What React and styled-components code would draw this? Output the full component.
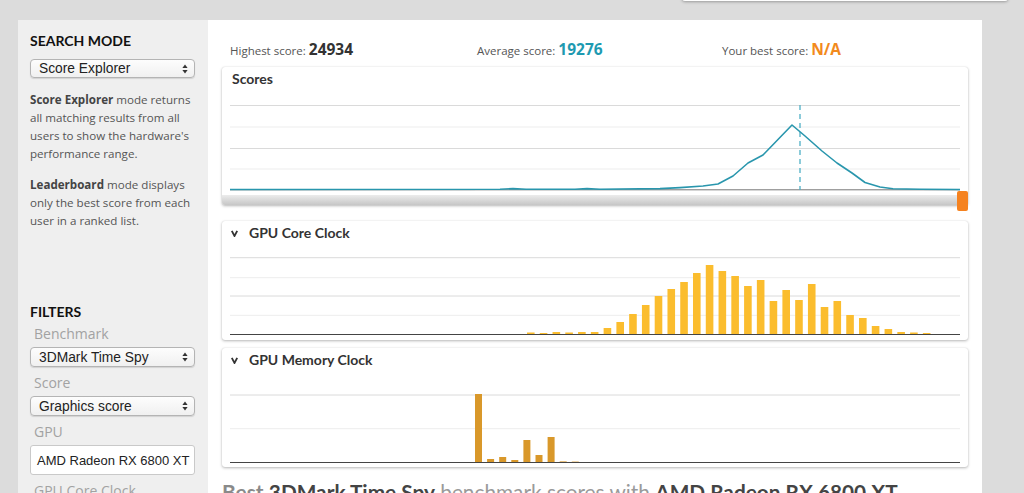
import React from 'react';
import styled, { createGlobalStyle } from 'styled-components';

const GlobalStyle = createGlobalStyle`
	html, body {
		margin: 0;
		background: #dcdcdc;
	}
	body {
		font-family: "Open Sans", "Liberation Sans", sans-serif;
		overflow: hidden;
	}
`;

const Page = styled.div`
	position: relative;
	padding: 20px 0 0 18px;
	height: 473px;
`;

const TopBox = styled.div`
	position: absolute;
	left: 682px;
	top: -40px;
	width: 326px;
	height: 41px;
	background: #fff;
	border-radius: 3px;
	box-shadow: 0 1px 3px rgba(0, 0, 0, 0.3);
`;

const Shell = styled.div`
	display: flex;
	width: 964px;
	height: 100%;
`;

const Sidebar = styled.aside`
	width: 190px;
	flex-shrink: 0;
	background: #efefef;
	padding: 12px 10px 0 12px;
	box-sizing: border-box;
`;

const SideHeading = styled.h3`
	margin: ${(p) => p.$top || 0}px 0 0;
	font-family: Lato, "Open Sans", sans-serif;
	font-weight: 700;
	font-size: 14px;
	line-height: 18px;
	color: #111;
	text-transform: uppercase;
`;

const SelectBox = styled.div`
	display: flex;
	align-items: center;
	justify-content: space-between;
	height: ${(p) => p.$h || 20}px;
	width: 165px;
	box-sizing: border-box;
	margin-top: ${(p) => p.$top || 0}px;
	padding: 0 6px 0 8px;
	border: 1px solid #b4b4b4;
	border-radius: 4px;
	background: linear-gradient(#fdfdfd, #f0f0f0);
	box-shadow: 0 1px 1px rgba(0, 0, 0, 0.12);
	font-family: "Liberation Sans", Arial, sans-serif;
	font-size: 13.8px;
	color: #222;
`;

const Arrows = () => (
	<svg width="6" height="10" viewBox="0 0 6 10">
		<polygon points="3,0.5 5.6,4 0.4,4" fill="#333" />
		<polygon points="0.4,6 5.6,6 3,9.5" fill="#333" />
	</svg>
);

const Desc = styled.p`
	margin: 13px 0 0;
	font-size: 11.6px;
	line-height: 18px;
	color: #555;

	b {
		color: #444;
		font-weight: 700;
	}
`;

const FieldLabel = styled.div`
	margin: ${(p) => p.$top || 7}px 0 0 4px;
	font-size: 14px;
	line-height: 18px;
	color: #a2a2a2;
`;

const TextInput = styled.div`
	display: flex;
	align-items: center;
	height: 30px;
	width: 165px;
	box-sizing: border-box;
	margin-top: 4px;
	padding: 0 6px;
	background: #fff;
	border: 1px solid #c9c9c9;
	border-radius: 3px;
	font-family: "Liberation Sans", Arial, sans-serif;
	font-size: 13px;
	color: #222;
	white-space: nowrap;
`;

const Main = styled.main`
	flex: 1;
	background: #fff;
	padding: 0 14px;
`;

const Stats = styled.div`
	display: grid;
	grid-template-columns: 247px 245px auto;
	height: 47px;
	box-sizing: border-box;
	padding: 18px 0 0 8px;
	line-height: 22px;
`;

const Stat = styled.div`
	font-size: 11.5px;
	color: #555;
	white-space: nowrap;
`;

const StatValue = styled.span`
	font-size: 15.5px;
	font-weight: 700;
	color: ${(p) => p.$color || '#333'};
`;

const Card = styled.section`
	position: relative;
	margin-top: ${(p) => p.$top || 0}px;
	padding: 0 8px ${(p) => p.$bottom || 0}px;
	background: #fff;
	border-radius: 3px;
	box-shadow: 0 1px 3px rgba(0, 0, 0, 0.28), 0 0 1px rgba(0, 0, 0, 0.15);
`;

const CardTitle = styled.div`
	display: flex;
	align-items: center;
	gap: 11px;
	height: 21px;
	box-sizing: border-box;
	padding: 3px 0 0 ${(p) => (p.$chevron ? 1 : 2)}px;
	font-family: Lato, "Open Sans", sans-serif;
	font-weight: 700;
	font-size: 14px;
	line-height: 18px;
	color: #333;
`;

const Chart = styled.svg`
	display: block;
`;

const Track = styled.div`
	height: 10px;
	margin: 2px -8px 0;
	background: linear-gradient(#ececec, #c6c6c6);
	border-radius: 0 0 3px 3px;
`;

const Handle = styled.div`
	position: absolute;
	right: 0;
	bottom: -6px;
	width: 11px;
	height: 20px;
	background: #f5821f;
	border-radius: 2px;
`;

const BottomTitle = styled.h2`
	margin: 12px 0 0;
	font-family: Lato, "Open Sans", sans-serif;
	font-size: 20.8px;
	line-height: 25px;
	font-weight: 400;
	color: #9a9a9a;
	white-space: nowrap;

	b {
		font-weight: 700;
		color: #444;
	}
	b.soft {
		color: #8a8a8a;
	}
`;

const Chevron = () => (
	<svg width="7" height="7" viewBox="0 0 7 7">
		<polyline points="0.8,0.8 3.5,6 6.2,0.8" fill="none" stroke="#333" strokeWidth="1.8" />
	</svg>
);

const W = 730;

const Grid = ({ lines }) =>
	lines.map((y, i) => (
		<line key={y} x1="0" x2={W} y1={y} y2={y} stroke={i % 2 ? '#ededed' : '#dadada'} strokeWidth="1" />
	));

const scorePts = [
	[230, 189.5], [500, 189.3], [513, 188.6], [526, 189.3], [575, 189.2], [587, 188.6],
	[600, 189.3], [660, 188.6], [680, 187.6], [703, 186], [718, 184], [733, 176],
	[748, 163], [763, 155], [792, 125], [805, 136], [822, 151], [837, 163],
	[852, 173], [865, 182.5], [880, 187], [893, 188.7], [920, 189.3], [960, 189.5]
];

const coreBars = [
	1.5, 1, 2, 1.5, 2, 2, 6, 12, 20, 29, 38, 45, 52, 61, 69, 63,
	58, 48, 54, 33, 44, 34, 50, 27, 33, 19, 16, 8, 5, 2, 1.5, 1
];

const memBars = [68, 3, 5, 2, 22, 7, 25, 0.6, 0.4];

const ScoresChart = () => {
	const pts = scorePts.map(([x, y]) => `${x - 230},${y - 88}`).join(' ');
	return (
		<Chart width={W} height="105">
			<Grid lines={[17.5, 39, 60.5, 81]} />
			<line x1="0" x2={W} y1="101.8" y2="101.8" stroke="#777" strokeWidth="1" />
			<line x1="570" x2="570" y1="17" y2="102" stroke="#4fb0c6" strokeWidth="1.3" strokeDasharray="5 4" />
			<polyline points={pts} fill="none" stroke="#2996ad" strokeWidth="1.6" strokeLinejoin="round" />
		</Chart>
	);
};

const CoreChart = () => (
	<Chart width={W} height="94">
		<Grid lines={[15.7, 35.7, 54, 73.3]} />
		{coreBars.map((h, i) => (
			<rect key={i} x={297 + i * 12.77} y={92 - h} width="7.6" height={h} fill="#fbbd2e" />
		))}
		<line x1="0" x2={W} y1="92.5" y2="92.5" stroke="#444" strokeWidth="1" />
	</Chart>
);

const MemoryChart = () => (
	<Chart width={W} height="95">
		<Grid lines={[26, 59.7]} />
		{memBars.map((h, i) => (
			<rect key={i} x={245 + i * 12.1} y={93 - h} width="7" height={h} fill="#d9982a" />
		))}
		<line x1="0" x2={W} y1="93.5" y2="93.5" stroke="#444" strokeWidth="1" />
	</Chart>
);

export default function App() {
	return (
		<Page>
			<GlobalStyle />
			<TopBox />
			<Shell>
				<Sidebar>
					<SideHeading>Search mode</SideHeading>
					<SelectBox $top={9} $h={19}>
						<span>Score Explorer</span>
						<Arrows />
					</SelectBox>
					<Desc>
						<b>Score Explorer</b> mode returns all matching results from all users to show the hardware's
						performance range.
					</Desc>
					<Desc>
						<b>Leaderboard</b> mode displays only the best score from each user in a ranked list.
					</Desc>

					<SideHeading $top={73}>Filters</SideHeading>
					<FieldLabel $top={4}>Benchmark</FieldLabel>
					<SelectBox $top={4}>
						<span>3DMark Time Spy</span>
						<Arrows />
					</SelectBox>
					<FieldLabel>Score</FieldLabel>
					<SelectBox $top={4}>
						<span>Graphics score</span>
						<Arrows />
					</SelectBox>
					<FieldLabel>GPU</FieldLabel>
					<TextInput>AMD Radeon RX 6800 XT</TextInput>
					<FieldLabel>GPU Core Clock</FieldLabel>
				</Sidebar>

				<Main>
					<Stats>
						<Stat>
							Highest score: <StatValue>24934</StatValue>
						</Stat>
						<Stat>
							Average score: <StatValue $color="#1e9ab1">19276</StatValue>
						</Stat>
						<Stat>
							Your best score: <StatValue $color="#f28a1d">N/A</StatValue>
						</Stat>
					</Stats>

					<Card>
						<CardTitle>Scores</CardTitle>
						<ScoresChart />
						<Track />
						<Handle />
					</Card>

					<Card $top={16} $bottom={4}>
						<CardTitle $chevron>
							<Chevron />
							GPU Core Clock
						</CardTitle>
						<CoreChart />
					</Card>

					<Card $top={8} $bottom={3}>
						<CardTitle $chevron>
							<Chevron />
							GPU Memory Clock
						</CardTitle>
						<MemoryChart />
					</Card>

					<BottomTitle>
						<b className="soft">Best</b> <b>3DMark Time Spy</b> benchmark scores with{' '}
						<b>AMD Radeon RX 6800 XT</b>
					</BottomTitle>
				</Main>
			</Shell>
		</Page>
	);
}
